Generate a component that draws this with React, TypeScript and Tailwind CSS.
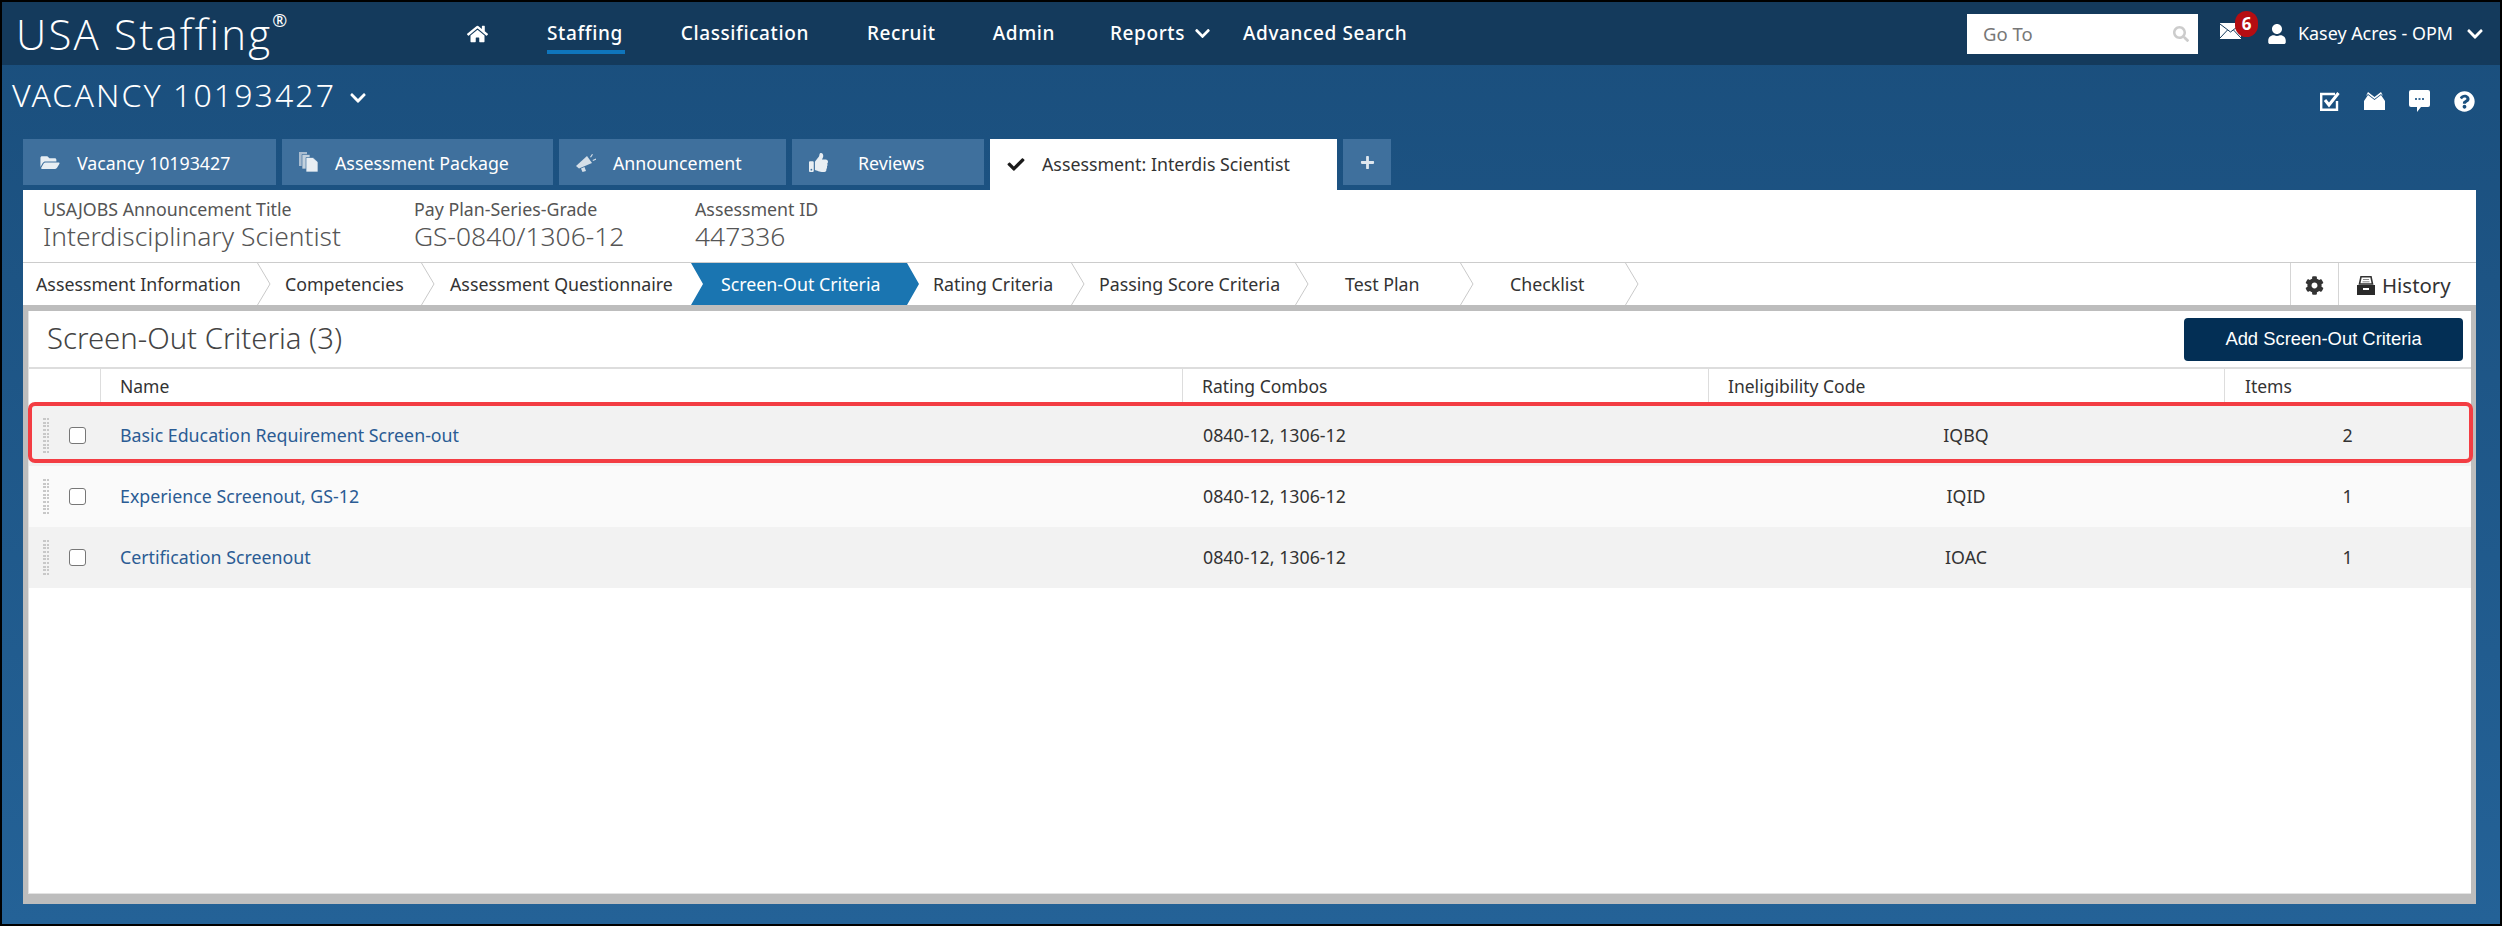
import React from "react";
import { FaHome, FaThumbsUp, FaCheck, FaPlus, FaSearch, FaUser, FaCog, FaChevronDown, FaQuestionCircle, FaFolderOpen } from "react-icons/fa";

const NavItem = ({ children, className = "" }: { children: React.ReactNode; className?: string }) => (
  <span className={"text-[19px] font-medium tracking-[0.6px] text-white whitespace-nowrap " + className}>{children}</span>
);

const Tab = ({ w, icon, label, gap }: { w: string; icon: React.ReactNode; label: string; gap: string }) => (
  <div className={"flex h-[46px] items-center bg-[#3f709d] pl-[17px] text-[17.8px] text-white " + w + " " + gap}>
    {icon}
    <span className="whitespace-nowrap pt-[2px]">{label}</span>
  </div>
);

const Chevron = () => (
  <svg viewBox="0 0 14 42" className="h-[42px] w-[14px] shrink-0" fill="none" stroke="#c9c9c9" strokeWidth="1">
    <path d="M0.5 0 L13 21 L0.5 42" />
  </svg>
);

const Step = ({ label, w, pl, chevron = true }: { label: string; w: string; pl: string; chevron?: boolean }) => (
  <div className={"flex h-[42px] shrink-0 items-center justify-between text-[17.8px] text-[#333] " + w + " " + pl}>
    <span className="whitespace-nowrap pt-[1px]">{label}</span>
    {chevron && <Chevron />}
  </div>
);

const Grip = () => (
  <div className="grid h-[35px] w-[7px] grid-cols-2 content-between justify-between">
    {Array.from({ length: 20 }).map((_, i) => (
      <span key={i} className="h-[2px] w-[2.5px] bg-[#c8c8c8]" />
    ))}
  </div>
);

const Row = ({ name, code, items, bg }: { name: string; code: string; items: string; bg: string }) => (
  <div className={"grid h-[61px] grid-cols-[71px_1082px_526px_516px_1fr] items-center text-[17.8px] text-[#333] " + bg}>
    <div className="flex items-center pl-[14px]">
      <Grip />
      <span className="ml-[19px] h-[17px] w-[17px] rounded-[3px] border border-[#777] bg-white" />
    </div>
    <a className="pl-[20px] text-[#2b5c94]">{name}</a>
    <div className="pl-[21px]">0840-12, 1306-12</div>
    <div className="text-center">{code}</div>
    <div className="text-center">{items}</div>
  </div>
);

export default function App() {
  return (
    <div className="flex h-[926px] w-[2502px] flex-col overflow-hidden border-2 border-black bg-gradient-to-b from-[#1a4e7c] to-[#246297] [font-family:'Noto_Sans',sans-serif]">
      {/* top nav */}
      <header className="flex h-[63px] shrink-0 items-center bg-[#143a5c] pl-[14px] pr-[17px]">
        <div className="flex w-[451px] shrink-0 items-start">
          <span className="text-[42px] font-light leading-none tracking-[2.2px] text-white [font-family:'Open_Sans',sans-serif]">USA Staffing</span>
          <span className="-mt-[2px] text-[18px] leading-none text-white">®</span>
        </div>
        <FaHome className="h-[20px] w-[21px] text-white" />
        <nav className="ml-[59px] flex items-center">
          <span className="relative mr-[58px]">
            <NavItem>Staffing</NavItem>
            <span className="absolute -bottom-[6px] left-0 h-[4px] w-[78px] bg-[#0f75bc]" />
          </span>
          <NavItem className="mr-[58px]">Classification</NavItem>
          <NavItem className="mr-[57px]">Recruit</NavItem>
          <NavItem className="mr-[55px]">Admin</NavItem>
          <NavItem>Reports</NavItem>
          <FaChevronDown className="ml-[10px] mr-[33px] h-[17px] w-[15px] text-white" />
          <NavItem>Advanced Search</NavItem>
        </nav>
        <div className="ml-auto flex h-[40px] w-[231px] items-center justify-between bg-white pl-[16px] pr-[9px] text-[18.5px] text-[#777]">
          <span>Go To</span>
          <FaSearch className="h-[16px] w-[16px] text-[#ccc]" />
        </div>
        <div className="relative ml-[22px] -mt-[6px] h-[16px] w-[21px]">
          <svg viewBox="0 0 21 16" className="h-[16px] w-[21px]" fill="white" stroke="#143a5c" strokeWidth="1">
            <rect x="0" y="0" width="21" height="16" stroke="none" />
            <path d="M0 1 L10.5 9 L21 1 M0 15 L7.5 7 M21 15 L13.5 7" fill="none" />
          </svg>
          <span className="absolute -top-[12px] left-[15px] flex h-[26px] w-[23px] items-center justify-center rounded-full bg-[#b50d12] text-[17px] font-bold text-white">6</span>
        </div>
        <FaUser className="ml-[26px] h-[20px] w-[20px] text-white" />
        <span className="ml-[11px] whitespace-nowrap text-[17.9px] text-white">Kasey Acres - OPM</span>
        <FaChevronDown className="ml-[14px] h-[18px] w-[16px] text-white" />
      </header>

      {/* vacancy title */}
      <div className="flex h-[74px] shrink-0 items-start justify-between pl-[10px] pr-[25px] pt-[10px]">
        <div className="flex items-center">
          <span className="text-[32px] font-light leading-[40px] tracking-[2.1px] text-white">VACANCY 10193427</span>
          <FaChevronDown className="ml-[14px] mt-[6px] h-[18px] w-[16px] text-white" />
        </div>
        <div className="mt-[15px] flex items-center gap-[24px] text-white">
          <svg viewBox="0 0 20 19" className="h-[19px] w-[20px]" fill="none" stroke="white">
            <path d="M17 9 V17.8 H1.2 V2 H15" strokeWidth="2.4" />
            <path d="M5 8 L9 13 L18.5 1" strokeWidth="3" />
          </svg>
          <svg viewBox="0 0 21 18" className="h-[18px] w-[21px]" fill="white">
            <path d="M0 9 L4 3 L10.5 8 L17 3 L21 9 V18 H0 Z M2 4 L4 0 L10.5 5 L17 0 L19 4 L17 2 L10.5 7 L4 2 Z" />
          </svg>
          <svg viewBox="0 0 21 22" className="h-[22px] w-[21px]">
            <path d="M2 0 H19 Q21 0 21 2 V15 Q21 17 19 17 H12 L8 22 V17 H2 Q0 17 0 15 V2 Q0 0 2 0 Z" fill="white" />
            <path d="M6 8 H8 V10 H6 Z M9.5 8 H11.5 V10 H9.5 Z M13 8 H15 V10 H13 Z" fill="#3d6d98" />
          </svg>
          <FaQuestionCircle className="h-[21px] w-[21px]" />
        </div>
      </div>

      <main className="ml-[21px] mr-[24px] flex h-[765px] shrink-0 flex-col">
        {/* tabs */}
        <div className="flex h-[51px] shrink-0 items-start gap-[6px]">
          <Tab w="w-[253px]" gap="gap-[17px]" label="Vacancy 10193427" icon={<FaFolderOpen className="h-[17px] w-[20px] text-[#e8eef3]" />} />
          <Tab w="w-[271px]" gap="gap-[17px]" label="Assessment Package" icon={
            <svg viewBox="0 0 19 20" className="h-[20px] w-[19px]">
              <path d="M0 0 H8 V14 H0 Z" fill="#a9bccf" />
              <path d="M3 2.5 H11 V17 H3 Z" fill="#c3d1dd" stroke="#3f709d" strokeWidth="0.7" />
              <path d="M7 5.5 H14 L19 10 V20 H7 Z" fill="#e8eef3" stroke="#3f709d" strokeWidth="0.7" />
            </svg>
          } />
          <Tab w="w-[227px]" gap="gap-[17px]" label="Announcement" icon={
            <svg viewBox="0 0 20 19" className="h-[19px] w-[20px]" fill="#d5dfe8">
              <path d="M0 13 L11 3 L16 10 L3 15.5 Z" />
              <path d="M5 15.5 L8.5 14 L10 18 L6.5 19 Z" />
              <path d="M14 4 L16 1 L17 1.6 L15 4.6 Z M16.5 7 L20 5.5 L20 6.8 L17 8 Z" />
            </svg>
          } />
          <Tab w="w-[192px]" gap="gap-[30px]" label="Reviews" icon={<FaThumbsUp className="h-[19px] w-[19px] text-[#e8eef3]" />} />
          <div className="flex h-[51px] w-[347px] items-start gap-[16px] bg-white pl-[16px] pt-[12px] text-[17.8px] text-[#333]">
            <FaCheck className="mt-[5px] h-[17px] w-[20px] text-[#1a1a1a]" />
            <span className="whitespace-nowrap">Assessment: Interdis Scientist</span>
          </div>
          <div className="flex h-[46px] w-[48px] items-center justify-center bg-[#3f709d]">
            <FaPlus className="h-[15px] w-[15px] text-[#dfe7ef]" />
          </div>
        </div>

        {/* card */}
        <div className="flex min-h-0 flex-1 flex-col bg-[#bdbdbd]">
          <div className="flex h-[73px] shrink-0 items-start gap-[72px] border-b border-[#ccc] bg-white pl-[20px] pt-[8px] text-[#555]">
            <div className="w-[299px]">
              <div className="whitespace-nowrap text-[17.8px] leading-[22px]">USAJOBS Announcement Title</div>
              <div className="whitespace-nowrap text-[26.4px] font-light leading-[32px]">Interdisciplinary Scientist</div>
            </div>
            <div className="w-[209px]">
              <div className="whitespace-nowrap text-[17.8px] leading-[22px]">Pay Plan-Series-Grade</div>
              <div className="whitespace-nowrap text-[26.4px] font-light leading-[32px]">GS-0840/1306-12</div>
            </div>
            <div>
              <div className="whitespace-nowrap text-[17.8px] leading-[22px]">Assessment ID</div>
              <div className="text-[26.4px] font-light leading-[32px]">447336</div>
            </div>
          </div>

          <div className="flex h-[42px] shrink-0 bg-white">
            <Step label="Assessment Information" w="w-[248px]" pl="pl-[13px]" />
            <Step label="Competencies" w="w-[164px]" pl="pl-[14px]" />
            <Step label="Assessment Questionnaire" w="w-[256px]" pl="pl-[15px]" chevron={false} />
            <div className="flex h-[42px] w-[228px] shrink-0 items-center bg-[#1a75b1] pl-[30px] text-[17.8px] text-white [clip-path:polygon(0_0,216px_0,228px_50%,216px_100%,0_100%,12px_50%)]">
              <span className="whitespace-nowrap pt-[1px]">Screen-Out Criteria</span>
            </div>
            <Step label="Rating Criteria" w="w-[166px]" pl="pl-[14px]" />
            <Step label="Passing Score Criteria" w="w-[224px]" pl="pl-[14px]" />
            <Step label="Test Plan" w="w-[165px]" pl="pl-[36px]" />
            <Step label="Checklist" w="w-[165px]" pl="pl-[36px]" />
            <div className="ml-auto flex h-[42px] w-[48px] items-center justify-center border-l border-[#d5d5d5] pt-[3px]">
              <FaCog className="h-[19px] w-[19px] text-[#333]" />
            </div>
            <div className="flex h-[42px] w-[138px] items-center gap-[7px] border-l border-[#d5d5d5] pl-[18px] pt-[3px] text-[20.4px] text-[#333]">
              <svg viewBox="0 0 18 19" className="h-[19px] w-[18px]">
                <path d="M4 0.8 H14 L15.5 8 H2.5 Z" fill="none" stroke="#333" strokeWidth="1.6" />
                <path d="M6 3.5 H12 M5.5 5.8 H12.5" stroke="#888" strokeWidth="1" />
                <path d="M0 9 H18 V19 H0 Z M6 12 V14 H12 V12 Z" fill="#2a2a2a" fillRule="evenodd" />
              </svg>
              <span>History</span>
            </div>
          </div>

          <div className="mx-[5px] mb-[10px] mt-[6px] flex min-h-0 flex-1 flex-col border-b border-l border-[#e3e3e3] bg-white">
            <div className="flex h-[58px] shrink-0 items-center justify-between border-b-2 border-[#ddd] pl-[18px] pr-[8px]">
              <h1 className="text-[29.3px] font-light text-[#444]">Screen-Out Criteria (3)</h1>
              <button className="h-[43px] w-[279px] rounded-[4px] bg-[#032f55] text-[18.4px] text-white [font-family:'Liberation_Sans',sans-serif]">Add Screen-Out Criteria</button>
            </div>
            <div className="grid h-[36px] shrink-0 grid-cols-[71px_1082px_526px_516px_1fr] text-[17.5px] text-[#333]">
              <div />
              <div className="flex items-center border-l border-[#ddd] pb-[2px] pl-[19px]">Name</div>
              <div className="flex items-center border-l border-[#ddd] pb-[2px] pl-[19px]">Rating Combos</div>
              <div className="flex items-center border-l border-[#ddd] pb-[2px] pl-[19px]">Ineligibility Code</div>
              <div className="flex items-center border-l border-[#ddd] pb-[2px] pl-[20px]">Items</div>
            </div>
            <div className="relative">
              <Row name="Basic Education Requirement Screen-out" code="IQBQ" items="2" bg="bg-[#f2f2f2]" />
              <Row name="Experience Screenout, GS-12" code="IQID" items="1" bg="bg-[#fafafa]" />
              <Row name="Certification Screenout" code="IOAC" items="1" bg="bg-[#f2f2f2]" />
              <div className="absolute -left-px -right-[2px] -top-[3px] h-[61px] rounded-[7px] border-[4px] border-[#f33d43]" />
            </div>
          </div>
        </div>
      </main>
    </div>
  );
}
